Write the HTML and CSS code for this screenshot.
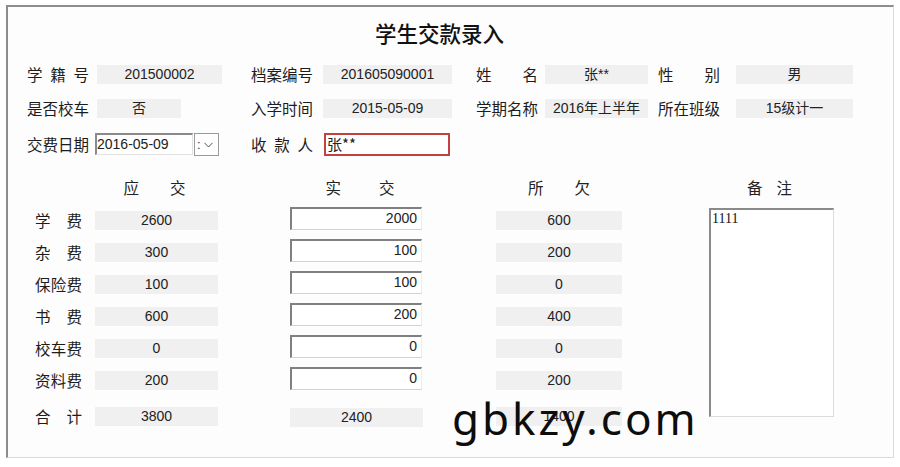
FILE: index.html
```html
<!DOCTYPE html>
<html lang="zh-CN">
<head>
<meta charset="utf-8">
<title>学生交款录入</title>
<link rel="stylesheet" href="styles.css">
</head>
<body>
<div class="window">
  <div class="title">学生交款录入</div>

  <div class="info">
    <div class="lbl c1">学 籍 号</div>
    <div class="val c3">201500002</div>
    <div class="lbl c5">档案编号</div>
    <div class="val c7">201605090001</div>
    <div class="lbl c9">姓 名</div>
    <div class="val c11">张**</div>
    <div class="lbl c13">性 别</div>
    <div class="val c15">男</div>

    <div class="lbl c1">是否校车</div>
    <div class="val c3 short">否</div>
    <div class="lbl c5">入学时间</div>
    <div class="val c7">2015-05-09</div>
    <div class="lbl c9">学期名称</div>
    <div class="val c11">2016年上半年</div>
    <div class="lbl c13">所在班级</div>
    <div class="val c15">15级计一</div>

    <div class="lbl c1">交费日期</div>
    <div class="datebox">
      <div class="date">2016-05-09</div>
      <div class="drop"><span class="colon">:</span><svg class="chev" width="9" height="6" viewBox="0 0 9 6"><polyline points="0.5,0.8 4.5,5 8.5,0.8" fill="none" stroke="#555" stroke-width="1"/></svg></div>
    </div>
    <div class="lbl c5">收 款 人</div>
    <div class="payee">张**</div>
  </div>

  <div class="fees">
    <div class="head h2">应 交</div>
    <div class="head h4">实 交</div>
    <div class="head h6">所 欠</div>
    <div class="head h8">备 注</div>

    <div class="flbl first">学 费</div>
    <div class="gbox g2">2600</div>
    <div class="inp">2000</div>
    <div class="gbox g6">600</div>

    <div class="flbl">杂 费</div>
    <div class="gbox g2">300</div>
    <div class="inp">100</div>
    <div class="gbox g6">200</div>

    <div class="flbl">保险费</div>
    <div class="gbox g2">100</div>
    <div class="inp">100</div>
    <div class="gbox g6">0</div>

    <div class="flbl">书 费</div>
    <div class="gbox g2">600</div>
    <div class="inp">200</div>
    <div class="gbox g6">400</div>

    <div class="flbl">校车费</div>
    <div class="gbox g2">0</div>
    <div class="inp">0</div>
    <div class="gbox g6">0</div>

    <div class="flbl">资料费</div>
    <div class="gbox g2">200</div>
    <div class="inp">0</div>
    <div class="gbox g6">200</div>

    <div class="flbl">合 计</div>
    <div class="gbox g2">3800</div>
    <div class="gbox g4">2400</div>
    <div class="gbox g6">1400</div>

    <div class="memo">1111</div>
  </div>

  <div class="watermark">gbkzy.com</div>
</div>
</body>
</html>
```

FILE: styles.css
```css
html, body {
  margin: 0;
  padding: 0;
  background: #ffffff;
}

body {
  font-family: "Noto Sans CJK SC", "Noto Sans", sans-serif;
  color: #1c1c1c;
}

.window {
  position: relative;
  margin: 5px 0 0 6px;
  width: 885px;
  height: 450px;
  border-top: 2px solid #8d8d8d;
  border-left: 2px solid #8d8d8d;
  border-right: 1px solid #dadada;
  border-bottom: 1px solid #dadada;
  background: #fdfdfd;
  overflow: hidden;
}

.title {
  margin-top: 13px;
  padding-left: 367px;
  height: 26px;
  line-height: 26px;
  font-size: 21.5px;
  font-weight: 500;
  color: #111;
}

/* ---------- info block ---------- */
.info {
  margin-top: 19px;
  padding-left: 19px;
  display: grid;
  grid-template-columns: 62px 8px 125px 29px 62px 10px 129px 24px 62px 7px 103px 10px 62px 16px 117px;
  grid-template-rows: 19px 19px 23px;
  row-gap: 15px;
}

.lbl {
  font-size: 15.5px;
  line-height: 19px;
  text-align: justify;
  text-align-last: justify;
  white-space: nowrap;
  align-self: center;
}

.c1 { grid-column: 1; }
.c3 { grid-column: 3; }
.c5 { grid-column: 5; }
.c7 { grid-column: 7; }
.c9 { grid-column: 9; }
.c11 { grid-column: 11; }
.c13 { grid-column: 13; }
.c15 { grid-column: 15; }

.val {
  background: #f0f0f0;
  font-family: "Liberation Sans", "Noto Sans CJK SC", sans-serif;
  font-size: 14px;
  line-height: 19px;
  height: 19px;
  text-align: center;
  white-space: nowrap;
  color: #222;
}

.val.short {
  width: 84px;
}

.datebox {
  grid-column: 2 / 4;
  padding-left: 6px;
  display: flex;
  align-items: flex-start;
}

.date {
  box-sizing: border-box;
  width: 98px;
  height: 22px;
  border-top: 2px solid #8a8a8a;
  border-left: 2px solid #8a8a8a;
  border-right: 1px solid #e2e2e2;
  border-bottom: 1px solid #e2e2e2;
  background: #fff;
  font-family: "Liberation Sans", sans-serif;
  font-size: 14px;
  line-height: 19px;
  color: #222;
}

.drop {
  box-sizing: border-box;
  margin-left: 1px;
  width: 25px;
  height: 23px;
  border: 1px solid #9a9a9a;
  background: #fff;
  display: flex;
  align-items: center;
  padding-left: 2px;
}

.colon {
  font-family: "Liberation Sans", sans-serif;
  font-size: 13px;
  line-height: 13px;
  color: #333;
  margin-right: 3px;
}

.chev {
  display: block;
}

.payee {
  grid-column: 7 / 8;
  box-sizing: border-box;
  margin-left: 1px;
  width: 126px;
  height: 23px;
  border: 2px solid #c24141;
  background: #fff;
  font-size: 15px;
  line-height: 18px;
  padding-left: 1px;
  color: #222;
}

/* ---------- fees block ---------- */
.fees {
  margin-top: 19px;
  padding-left: 27px;
  display: grid;
  grid-template-columns: 60px 123px 72px 132px 74px 126px 87px 125px;
  grid-template-rows: repeat(7, 23px) 27px;
  row-gap: 9px;
}

.head {
  grid-row: 1;
  font-size: 15.5px;
  line-height: 20px;
  text-align: justify;
  text-align-last: justify;
  white-space: nowrap;
  align-self: center;
  justify-self: center;
  color: #222;
}

.h2 { grid-column: 2; width: 62px; margin-right: 4px; }
.h4 { grid-column: 4; width: 69px; margin-left: 8px; }
.h6 { grid-column: 6; width: 62px; }
.h8 { grid-column: 8; width: 45px; margin-right: 4px; }

.flbl {
  grid-column: 1;
  width: 47px;
  font-size: 15.5px;
  line-height: 19px;
  text-align: justify;
  text-align-last: justify;
  white-space: nowrap;
  align-self: end;
}

.flbl.first {
  grid-row: 2;
}

.gbox {
  align-self: end;
  height: 19px;
  line-height: 19px;
  background: #f0f0f0;
  font-family: "Liberation Sans", sans-serif;
  font-size: 14px;
  text-align: center;
  color: #222;
}

.g2 { grid-column: 2; }
.g4 { grid-column: 4; margin-bottom: -1px; width: 133px; }
.g6 { grid-column: 6; }

.inp {
  grid-column: 4;
  box-sizing: border-box;
  height: 23px;
  border-top: 2px solid #808080;
  border-left: 2px solid #808080;
  border-right: 1px solid #ececec;
  border-bottom: 1px solid #d4d4d4;
  background: #fff;
  font-family: "Liberation Sans", sans-serif;
  font-size: 14px;
  line-height: 19px;
  text-align: right;
  padding-right: 4px;
  color: #222;
}

.memo {
  grid-column: 8;
  grid-row: 2 / 9;
  align-self: start;
  margin-top: 1px;
  box-sizing: border-box;
  height: 209px;
  border-top: 2px solid #8a8a8a;
  border-left: 2px solid #8a8a8a;
  border-right: 1px solid #dcdcdc;
  border-bottom: 1px solid #dcdcdc;
  background: #fff;
  font-family: "Liberation Serif", serif;
  font-size: 14px;
  line-height: 18px;
  padding-left: 1px;
  color: #111;
}

.watermark {
  position: absolute;
  left: 444px;
  top: 389px;
  font-family: "Noto Sans", sans-serif;
  font-size: 44px;
  line-height: 1;
  letter-spacing: 3px;
  color: #0d0d0d;
  white-space: nowrap;
}
```
